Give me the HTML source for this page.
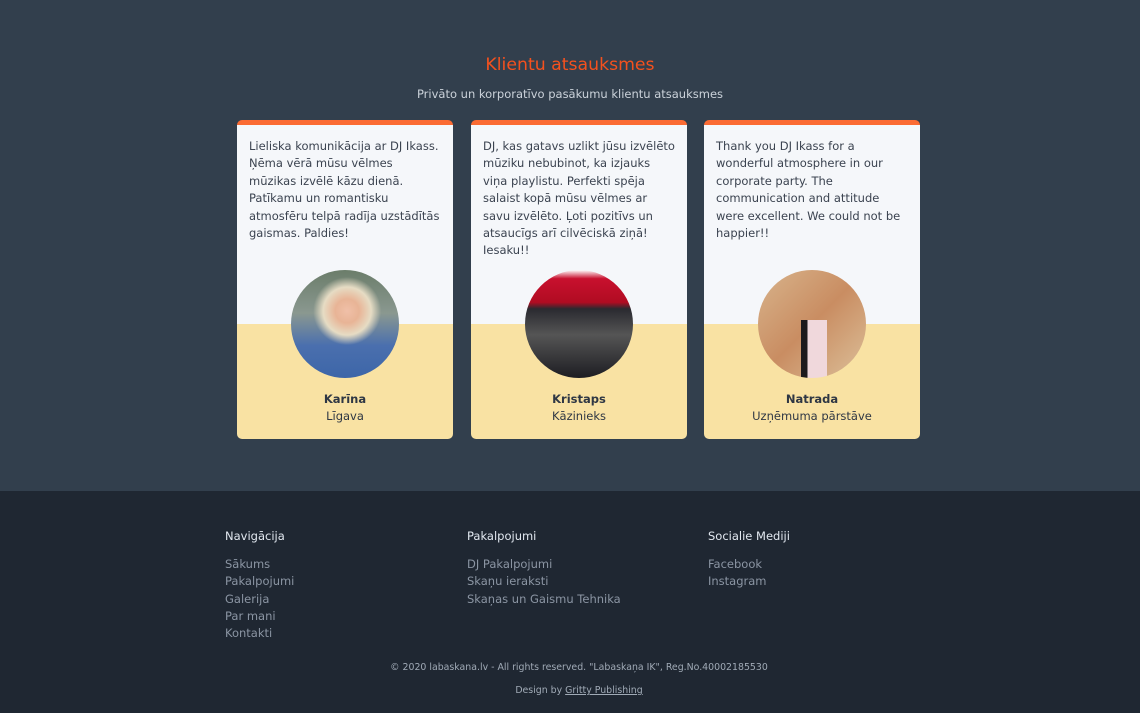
<!DOCTYPE html>
<html><head><meta charset="utf-8">
<style>
*{margin:0;padding:0;box-sizing:border-box}
body{width:1140px;height:713px;overflow:hidden;font-family:"DejaVu Sans","Liberation Sans",sans-serif;background:#1f2732}
.top{position:absolute;left:0;top:0;width:1140px;height:491px;background:#323f4d}
h1{position:absolute;top:55px;width:100%;text-align:center;font-weight:normal;font-size:17.3px;color:#f4511e}
.sub{position:absolute;top:87px;width:100%;text-align:center;font-size:11.5px;color:#cbd2da}
.card{position:absolute;top:120px;width:216px;height:319px;border-radius:5px;overflow:hidden;background:linear-gradient(#f5f7fa 0,#f5f7fa 199px,#f9e2a3 199px);border-top:5px solid #fb6b33}
.card p{position:absolute;left:12px;top:13px;width:192px;font-size:11.5px;line-height:17.4px;color:#3b4350}
.av{position:absolute;left:54px;top:145px;width:108px;height:108px;border-radius:50%;overflow:hidden}
.nm{position:absolute;top:267px;width:100%;text-align:center;font-size:11.5px;font-weight:bold;color:#2f3744}
.rl{position:absolute;top:284px;width:100%;text-align:center;font-size:11.5px;color:#2f3744}
.col{position:absolute;top:529px;font-size:11.5px}
.col h4{font-weight:normal;color:#e2e8f0;font-size:11.5px;margin-bottom:13px}
.col div{color:#8b95a3;line-height:17.3px}
.cp{position:absolute;top:662px;left:9px;width:100%;text-align:center;font-size:9.4px;color:#a0aab6}
.ds{position:absolute;top:685px;left:9px;width:100%;text-align:center;font-size:9.4px;color:#a0aab6}
.ds u{color:#a0aab6}
</style></head><body>
<div class="top"></div>
<h1>Klientu atsauksmes</h1>
<div class="sub">Privāto un korporatīvo pasākumu klientu atsauksmes</div>

<div class="card" style="left:237px">
<p>Lieliska komunikācija ar DJ Ikass. Ņēma vērā mūsu vēlmes mūzikas izvēlē kāzu dienā. Patīkamu un romantisku atmosfēru telpā radīja uzstādītās gaismas. Paldies!</p>
<div class="av" style="background:radial-gradient(circle at 52% 38%,#f0c0a8 0,#e8b496 12px,#e6dcc4 24px,transparent 34px),linear-gradient(180deg,#6b7d6a 0,#8a9890 40%,#4a6fae 70%,#3d66a8 100%)"></div>
<div class="nm">Karīna</div><div class="rl">Līgava</div>
</div>

<div class="card" style="left:471px">
<p>DJ, kas gatavs uzlikt jūsu izvēlēto mūziku nebubinot, ka izjauks viņa playlistu. Perfekti spēja salaist kopā mūsu vēlmes ar savu izvēlēto. Ļoti pozitīvs un atsaucīgs arī cilvēciskā ziņā! Iesaku!!</p>
<div class="av" style="background:linear-gradient(180deg,#fff 0,#c8102e 8%,#b00c22 30%,#2a2a30 36%,#555 60%,#1d1d22 100%)"></div>
<div class="nm">Kristaps</div><div class="rl">Kāzinieks</div>
</div>

<div class="card" style="left:704px">
<p>Thank you DJ Ikass for a wonderful atmosphere in our corporate party. The communication and attitude were excellent. We could not be happier!!</p>
<div class="av" style="background:linear-gradient(90deg,transparent 40%,#1d1a1c 40%,#1d1a1c 46%,#f0d8dc 46%,#f0d8dc 64%,transparent 64%) 0 50px/100% 58px no-repeat,linear-gradient(135deg,#d8b48c,#c98d62 50%,#dcc09a)"></div>
<div class="nm">Natrada</div><div class="rl">Uzņēmuma pārstāve</div>
</div>

<div class="col" style="left:225px"><h4>Navigācija</h4><div>Sākums</div><div>Pakalpojumi</div><div>Galerija</div><div>Par mani</div><div>Kontakti</div></div>
<div class="col" style="left:467px"><h4>Pakalpojumi</h4><div>DJ Pakalpojumi</div><div>Skaņu ieraksti</div><div>Skaņas un Gaismu Tehnika</div></div>
<div class="col" style="left:708px"><h4>Socialie Mediji</h4><div>Facebook</div><div>Instagram</div></div>
<div class="cp">© 2020 labaskana.lv - All rights reserved. "Labaskaņa IK", Reg.No.40002185530</div>
<div class="ds">Design by <u>Gritty Publishing</u></div>
</body></html>
